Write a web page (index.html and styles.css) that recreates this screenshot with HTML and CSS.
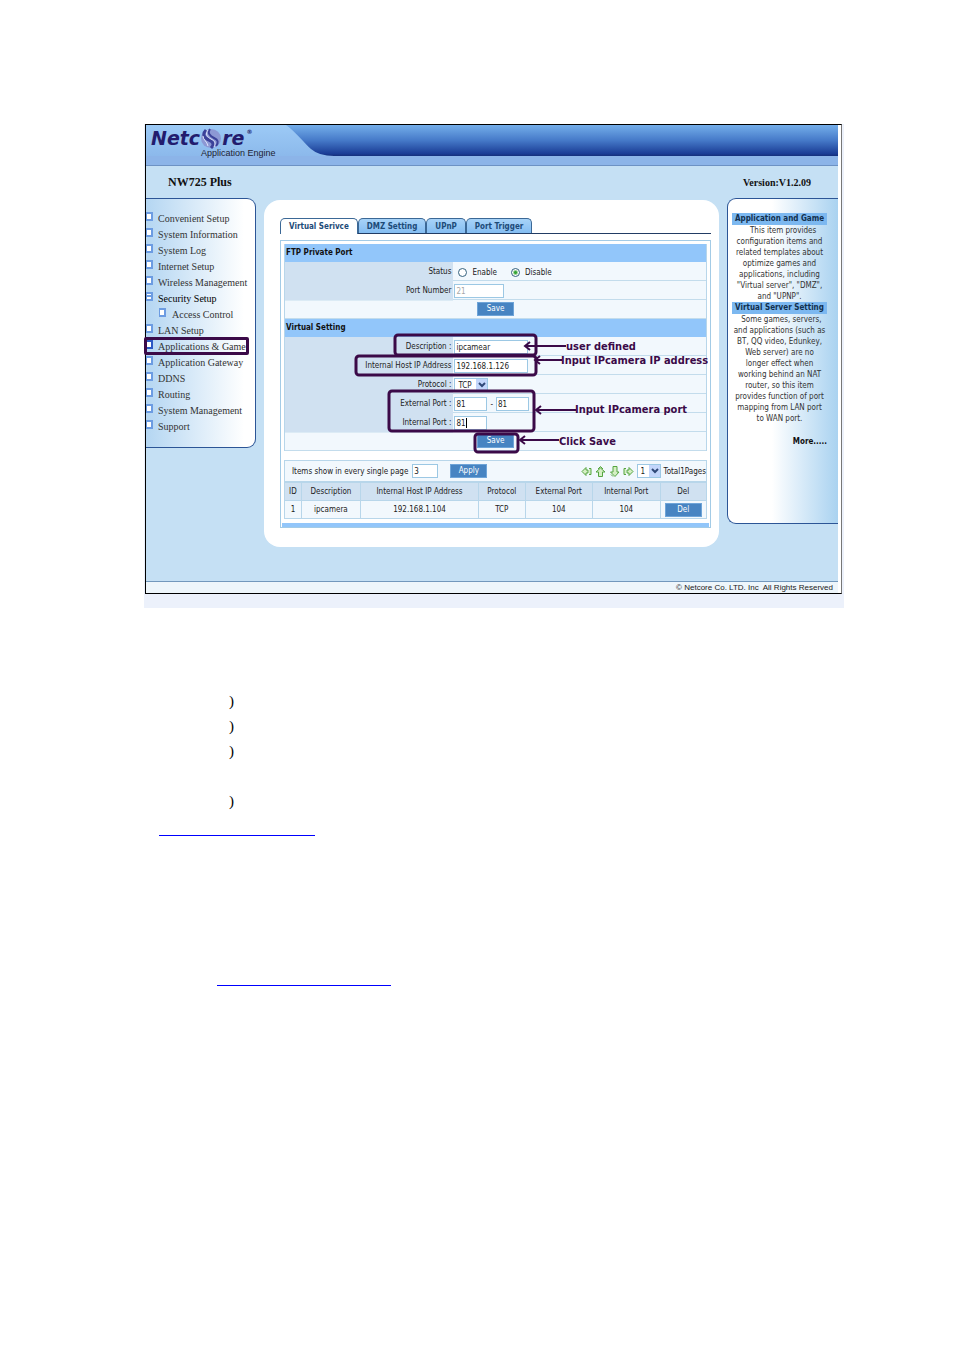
FILE: index.html
```html
<!DOCTYPE html>
<html lang="en">
<head>
    <meta charset="UTF-8">
    <meta name="viewport" content="width=device-width, initial-scale=1.0">
    <title>NW725 Plus - Virtual Service</title>
    <link rel="stylesheet" href="styles.css">
</head>
<body>

<div class="figure">
    <div class="screen">
        <header class="header">
            <div class="brand">
                <div class="logo">
                    <span>Netc</span>
                    <svg class="orb" width="22" height="21" viewBox="0 0 22 21">
                        <ellipse cx="11" cy="10.500" rx="10" ry="9.500" fill="#8d98d4"/>
                        <path d="M6 2C2 6 4 10 9 12S14 17 11 20" fill="none" stroke="#3c4299" stroke-width="3"/>
                        <path d="M10 1C7 5 10 8 14 10S19 14 16 18" fill="none" stroke="#3c4299" stroke-width="2"/>
                        <path d="M8 2C5 6 7 9 11 11S16 15 14 19M3 8C3 12 7 13 8 18" fill="none" stroke="#dfe5fa" stroke-width="1"/>
                    </svg>
                    <span>re</span>
                    <sup>®</sup>
                </div>
                <p class="tagline">Application Engine</p>
            </div>
            <div class="banner">
                <svg width="50" height="31" viewBox="0 0 50 31">
                    <defs>
                        <linearGradient id="sweep" x1="0" y1="0" x2="0" y2="1">
                            <stop offset="0" stop-color="#9ccaf6"/>
                            <stop offset="1" stop-color="#8cb9eb"/>
                        </linearGradient>
                    </defs>
                    <path d="M0 0C9 6 18 18 25 24Q33 31 48 31H0Z" fill="url(#sweep)"/>
                </svg>
            </div>
        </header>

        <div class="title-row">
            <h1>NW725 Plus</h1>
            <span class="version">Version:V1.2.09</span>
        </div>

        <div class="content">
            <nav class="sidebar">
                <ul>
                    <li><a href="#">Convenient Setup</a></li>
                    <li><a href="#">System Information</a></li>
                    <li><a href="#">System Log</a></li>
                    <li><a href="#">Internet Setup</a></li>
                    <li><a href="#">Wireless Management</a></li>
                    <li class="open"><a href="#">Security Setup</a></li>
                    <li class="sub"><a href="#">Access Control</a></li>
                    <li><a href="#">LAN Setup</a></li>
                    <li class="current"><a href="#">Applications &amp; Game</a></li>
                    <li><a href="#">Application Gateway</a></li>
                    <li><a href="#">DDNS</a></li>
                    <li><a href="#">Routing</a></li>
                    <li><a href="#">System Management</a></li>
                    <li><a href="#">Support</a></li>
                </ul>
            </nav>

            <main class="main">
                <div class="tabs">
                    <button class="tab active">Virtual Serivce</button>
                    <button class="tab">DMZ Setting</button>
                    <button class="tab">UPnP</button>
                    <button class="tab">Port Trigger</button>
                </div>

                <div class="frame">
                    <form class="group">
                        <h2>FTP Private Port</h2>
                        <div class="row">
                            <span class="label">Status</span>
                            <div class="field">
                                <input type="radio" id="enable" name="status"><label for="enable">Enable</label>
                                <input type="radio" id="disable" name="status" checked><label for="disable">Disable</label>
                            </div>
                        </div>
                        <div class="row">
                            <label class="label" for="ftpPort">Port Number</label>
                            <div class="field"><input type="text" class="medium" id="ftpPort" value="21" disabled></div>
                        </div>
                        <div class="row save"><button type="button" class="button">Save</button></div>
                    </form>

                    <form class="group">
                        <h2>Virtual Setting</h2>
                        <div class="row">
                            <label class="label" for="description">Description :</label>
                            <div class="field"><input type="text" class="wide" id="description" value="ipcamear"></div>
                        </div>
                        <div class="row">
                            <label class="label" for="hostIp">Internal Host IP Address</label>
                            <div class="field"><input type="text" class="wide" id="hostIp" value="192.168.1.126"></div>
                        </div>
                        <div class="row">
                            <label class="label" for="protocol">Protocol :</label>
                            <div class="field"><select id="protocol"><option>TCP</option></select></div>
                        </div>
                        <div class="row">
                            <label class="label" for="extFrom">External Port :</label>
                            <div class="field">
                                <input type="text" id="extFrom" value="81">
                                <span>-</span>
                                <input type="text" aria-label="External port end" value="81">
                            </div>
                        </div>
                        <div class="row">
                            <label class="label" for="intPort">Internal Port :</label>
                            <div class="field"><input type="text" id="intPort" value="81"><i class="caret"></i></div>
                        </div>
                        <div class="row save"><button type="button" class="button">Save</button></div>

                        <!-- notes drawn over the form -->
                        <svg class="notes" width="424" height="136" viewBox="0 0 424 136">
                            <g fill="none" stroke="#3b0a48" stroke-width="3">
                                <rect x="111" y="16" width="141" height="20" rx="3"/>
                                <rect x="72" y="37" width="180" height="19" rx="3"/>
                                <rect x="105" y="72" width="145" height="40" rx="3"/>
                                <rect x="191" y="115" width="43" height="18" rx="3"/>
                            </g>
                            <g fill="none" stroke="#3b0a48" stroke-width="2">
                                <path d="M282 27H241M246 23L241 27L246 31"/>
                                <path d="M278 41H251M256 37L251 41L256 45"/>
                                <path d="M292 91H252M257 87L252 91L257 95"/>
                                <path d="M275 121H236M241 117L236 121L241 125"/>
                            </g>
                            <g class="note-text">
                                <text x="282" y="31">user defined</text>
                                <text x="277" y="45">Input IPcamera IP address</text>
                                <text x="291" y="94">Input IPcamera port</text>
                                <text x="275" y="126">Click Save</text>
                            </g>
                        </svg>
                    </form>

                    <div class="pager">
                        <label for="perPage">Items show in every single page</label>
                        <input type="text" id="perPage" value="3">
                        <button type="button" class="button">Apply</button>
                        <div class="arrows">
                            <button type="button" aria-label="First page"><svg width="11" height="11" viewBox="0 0 11 11"><path d="M1 5.500L5 1.500V4H7V7H5V9.500ZM8 2.500H10V8.500H8"/></svg></button>
                            <button type="button" aria-label="Previous page"><svg width="11" height="11" viewBox="0 0 11 11"><path d="M5.500 2L10 6H7.500V10.500H3.500V6H1ZM3 3L5.500 .5L8 3"/></svg></button>
                            <button type="button" aria-label="Next page"><svg width="11" height="11" viewBox="0 0 11 11"><path d="M4 .5H8V6H10L6 10.500L1.500 6H4ZM2 8.500L4 10.500"/></svg></button>
                            <button type="button" aria-label="Last page"><svg width="11" height="11" viewBox="0 0 11 11"><path d="M10 5.500L6 1.500V4H4V7H6V9.500ZM3 2.500H1V8.500H3"/></svg></button>
                        </div>
                        <select aria-label="Page"><option>1</option></select>
                        <span>Total1Pages</span>
                    </div>

                    <table class="list">
                        <thead>
                            <tr>
                                <th class="c-id">ID</th>
                                <th class="c-desc">Description</th>
                                <th class="c-host">Internal Host IP Address</th>
                                <th class="c-proto">Protocol</th>
                                <th class="c-port">External Port</th>
                                <th class="c-port">Internal Port</th>
                                <th>Del</th>
                            </tr>
                        </thead>
                        <tbody>
                            <tr>
                                <td>1</td>
                                <td>ipcamera</td>
                                <td>192.168.1.104</td>
                                <td>TCP</td>
                                <td>104</td>
                                <td>104</td>
                                <td><button type="button" class="button">Del</button></td>
                            </tr>
                        </tbody>
                    </table>
                    <div class="bar"></div>
                </div>
            </main>

            <aside class="help">
                <h3>Application and Game</h3>
                <p>&emsp;This item provides<br>configuration items and<br>related templates about<br>optimize games and<br>applications, including<br>"Virtual server", "DMZ",<br>and "UPNP".</p>
                <h3>Virtual Server Setting</h3>
                <p>&ensp;Some games, servers,<br>and applications (such as<br>BT, QQ video, Edunkey,<br>Web server) are no<br>longer effect when<br>working behind an NAT<br>router, so this item<br>provides function of port<br>mapping from LAN port<br>to WAN port.</p>
                <a href="#" class="more">More.....</a>
            </aside>
        </div>

        <footer class="footer">© Netcore Co. LTD. Inc&nbsp; All Rights Reserved</footer>
    </div>
</div>

<div class="steps">
    <p>)</p>
    <p>)</p>
    <p>)</p>
    <p class="after-gap">)</p>
</div>
<a href="#" class="blank-link" aria-label="Link"></a>
<a href="#" class="blank-link second" aria-label="Link"></a>

</body>
</html>
```
FILE: styles.css
```css
*, *::before, *::after {
    box-sizing: border-box;
}
body {
    margin: 0;
    padding: 124px 110px 0 144px;
    background: #fff;
    color: #222;
    font-family: "DejaVu Sans Condensed", "DejaVu Sans", sans-serif;
    font-size: 8px;
}
h1, h2, h3, p, ul {
    margin: 0;
    padding: 0;
}
button, input, select {
    font: inherit;
    margin: 0;
    padding: 0;
}
a {
    color: inherit;
    text-decoration: none;
}

/* frame */
.figure {
    background: #ecf1fb;
    padding: 0 2px 14px 1px;
}
.screen {
    border: 1px solid #000;
    border-right-color: #777;
    background: #c5e0f4;
    box-shadow: inset -3px 0 #fff;
    padding-right: 3px;
}

/* header */
.header {
    display: flex;
    height: 41px;
    background: linear-gradient(#9ccaf6, #8cb9eb 31px, #8cb4e8 31px);
    border-bottom: 1px solid #6d92c4;
}
.brand {
    width: 140px;
    padding: 3px 0 0 5px;
}
.logo {
    display: flex;
    align-items: center;
    height: 20px;
    font-family: "DejaVu Sans", sans-serif;
    font-size: 19px;
    font-weight: bold;
    font-style: italic;
    color: #221c6e;
}
.logo sup {
    align-self: flex-start;
    font-size: 6px;
    font-style: normal;
    line-height: 8px;
    padding-left: 2px;
}
.tagline {
    padding-left: 50px;
    font-family: "Liberation Sans", sans-serif;
    font-size: 9px;
    line-height: 11px;
    color: #223;
}
.banner {
    flex: 1;
    height: 31px;
    background: linear-gradient(#74aeea, #4579c8 50%, #1b3d96 92%, #152f7c);
}
.banner svg {
    display: block;
}
.title-row {
    display: flex;
    justify-content: space-between;
    align-items: center;
    height: 32px;
    padding: 0 27px 0 22px;
    font-family: "Liberation Serif", serif;
    color: #111;
}
.title-row h1 {
    font-size: 12px;
}
.version {
    font-size: 10px;
    font-weight: bold;
}

/* columns */
.content {
    display: flex;
    align-items: flex-start;
    gap: 8px;
    padding-bottom: 34px;
}
.sidebar {
    flex: 0 0 110px;
    height: 250px;
    padding-top: 11px;
    border: 1px solid #2c5596;
    border-left: 0;
    border-radius: 0 9px 9px 0;
    background: linear-gradient(to right, #b4d6f2, #fff 90%);
}
.sidebar ul {
    list-style: none;
}
.sidebar li {
    position: relative;
    display: flex;
    align-items: center;
    gap: 5px;
    height: 16px;
    font-family: "Liberation Serif", serif;
    font-size: 10px;
    white-space: nowrap;
    color: #333;
}
.sidebar li::before {
    content: "";
    width: 7px;
    height: 9px;
    margin-bottom: 4px;
    border: 2px solid #6c9ce2;
    border-left-width: 1px;
    background: #fff;
}
.sidebar .sub {
    padding-left: 13px;
    gap: 6px;
}
.sidebar .open {
    color: #000;
}
.sidebar .open::before {
    background: linear-gradient(#fff 1px, #6c9ce2 1px, #6c9ce2 3px, #fff 3px);
}
.sidebar .current::before {
    border-color: #2c58c4;
}
.sidebar .current::after {
    content: "";
    position: absolute;
    inset: -1px 6px -1px -2px;
    border: 3px solid #3b0a48;
    border-radius: 2px;
}
.main {
    flex: 1;
    min-width: 0;
    margin-top: 2px;
    padding: 18px 8px 19px 16px;
    background: #fff;
    border-radius: 16px;
}

/* tabs */
.tabs {
    display: flex;
    margin-bottom: 6px;
    border-bottom: 1px solid #223c64;
}
.tab {
    height: 15px;
    padding: 0 8px;
    border: 1px solid #3b6896;
    border-bottom: 0;
    border-radius: 5px 5px 0 0;
    background: linear-gradient(#a8d3f8, #84bdf2);
    color: #1d4b78;
    font-size: 8px;
    font-weight: bold;
    line-height: 13px;
    cursor: pointer;
}
.tab.active {
    background: #fff;
    height: 16px;
    margin-bottom: -1px;
}

/* forms */
.frame {
    padding: 3px;
    border: 1px solid #a3cbe6;
}
.group {
    position: relative;
    border: 1px solid #b8d6ea;
    border-top: 0;
    border-bottom: 0;
}
.group h2 {
    height: 18px;
    padding-left: 1px;
    background: #92c6fa;
    color: #111;
    font-size: 8px;
    line-height: 18px;
}
.row {
    display: grid;
    grid-template-columns: 40% 1fr;
    height: 19px;
    background: #f2f8fd;
    border-bottom: 1px solid #c3dcec;
}
.label {
    padding-right: 2px;
    background: #d0e1f1;
    border-bottom: 1px solid #dcebf5;
    line-height: 19px;
    text-align: right;
}
.field {
    display: flex;
    align-items: center;
    padding-left: 1px;
}
.field span {
    padding: 0 3px;
}
input[type="text"] {
    width: 33px;
    height: 14px;
    padding-left: 1px;
    border: 1px solid #9cc8e4;
    background: #fff;
    color: #222;
}
input[type="text"].medium {
    width: 50px;
}
input[type="text"].wide {
    width: 74px;
}
input:disabled {
    color: #a8a8a8;
}
input[type="radio"] {
    appearance: none;
    width: 9px;
    height: 9px;
    margin: 0 5px 0 4px;
    border: 1px solid #35627e;
    border-radius: 50%;
    background: #fff;
}
input[type="radio"]:checked {
    margin-left: 14px;
    background: radial-gradient(#35a435 1px, #fff 3px);
}
select {
    appearance: none;
    width: 34px;
    height: 14px;
    padding-left: 3px;
    border: 1px solid #9cc8e4;
    border-radius: 0;
    background: #fff url('data:image/svg+xml,<svg xmlns="http://www.w3.org/2000/svg" width="11" height="12"><rect width="11" height="12" fill="%23c3d6fb"/><path d="M3 4l3 3l3-3" fill="none" stroke="%23304878" stroke-width="2"/></svg>') no-repeat right center;
    color: #222;
}
.caret {
    width: 1px;
    height: 10px;
    margin-left: -21px;
    background: #000;
}
.save {
    display: flex;
    align-items: center;
    justify-content: center;
}
.button {
    width: 37px;
    height: 14px;
    border: 1px solid #6ea4d8;
    background: #4784c2;
    color: #fff;
    line-height: 12px;
    cursor: pointer;
}
.notes {
    position: absolute;
    top: 0;
    left: -1px;
    pointer-events: none;
}
.note-text {
    fill: #3b0a48;
    font-size: 11px;
    font-weight: bold;
}

/* list */
.pager {
    display: flex;
    align-items: center;
    height: 22px;
    margin-top: 9px;
    padding-left: 7px;
    border: 1px solid #b8d6ea;
    background: #f2f8fd;
}
.pager input[type="text"] {
    width: 26px;
    margin-left: 4px;
}
.pager .button {
    margin-left: 12px;
}
.arrows {
    display: flex;
    gap: 3px;
    margin-left: auto;
}
.arrows button {
    width: 11px;
    height: 11px;
    border: 0;
    background: none;
}
.arrows svg {
    display: block;
    fill: #d5efc4;
    stroke: #55a540;
    stroke-width: 1;
}
.pager select {
    width: 24px;
    margin: 0 3px;
}
.list {
    width: 100%;
    border-collapse: collapse;
    table-layout: fixed;
    background: #f2f8fd;
}
.list th, .list td {
    height: 18px;
    padding: 0;
    border: 1px solid #b8d6ea;
    font-weight: normal;
    text-align: center;
    white-space: nowrap;
}
.list th {
    background: #d0e1f1;
}
.list .button {
    display: block;
    margin: 0 auto;
}
.c-id { width: 4%; }
.c-desc { width: 14%; }
.c-host { width: 28%; }
.c-proto { width: 11%; }
.c-port { width: 16%; }
.bar {
    height: 4px;
    margin: 4px -2px -3px;
    background: #92c6fa;
}

/* help */
.help {
    flex: 0 0 111px;
    height: 326px;
    padding: 14px 11px 0 4px;
    border: 1px solid #2c5596;
    border-right: 0;
    border-radius: 9px 0 0 9px;
    background: linear-gradient(to right, #fff 40%, #a9d2f0);
    line-height: 11px;
    text-align: center;
    white-space: nowrap;
    color: #333;
}
.help h3 {
    background: #7cb8f0;
    font-size: 8px;
    line-height: 12px;
    color: #12304e;
}
.more {
    display: block;
    margin-top: 12px;
    font-size: 8px;
    font-weight: bold;
    text-align: right;
    color: #111;
}
.footer {
    height: 12px;
    padding-right: 5px;
    border-top: 1px solid #7398bc;
    background: #eef6fb;
    font-family: "Liberation Sans", sans-serif;
    font-size: 8px;
    line-height: 11px;
    text-align: right;
}

/* text under the figure */
.steps {
    padding: 81px 0 0 85px;
    font-family: "Liberation Serif", serif;
    font-size: 15px;
    line-height: 25px;
    color: #000;
}
.after-gap {
    margin-top: 25px;
}
.blank-link {
    display: block;
    width: 156px;
    height: 22px;
    margin-left: 15px;
    border-bottom: 1px solid #0000ff;
}
.blank-link.second {
    width: 174px;
    height: 150px;
    margin-left: 73px;
}
```
